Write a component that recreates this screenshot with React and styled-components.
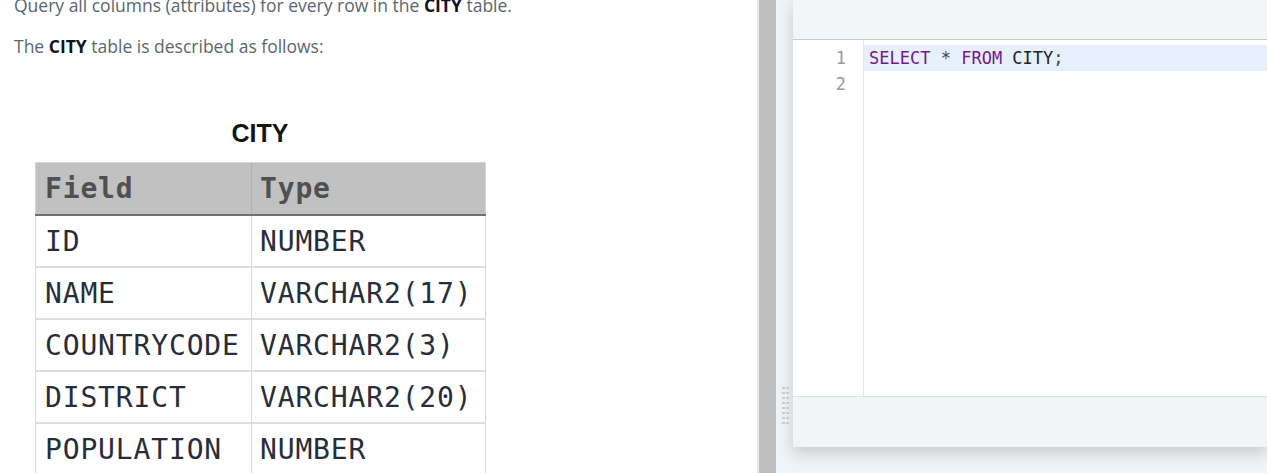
import React from "react";
import styled, { createGlobalStyle } from "styled-components";

const Global = createGlobalStyle`
  html, body {
    margin: 0;
    padding: 0;
    background: #ffffff;
    overflow: hidden;
  }
  * { box-sizing: border-box; }
`;

const Page = styled.div`
  display: flex;
  width: 1267px;
  height: 473px;
  overflow: hidden;
`;

const LeftPane = styled.div`
  width: 757px;
  flex-shrink: 0;
  padding: 0 14px;
  overflow: hidden;
  font-family: "Open Sans", "Liberation Sans", sans-serif;
  font-size: 17.5px;
  line-height: 26px;
  color: #5b6670;
`;

const Para = styled.p`
  margin: ${(p) => (p.$first ? "-8px 0 15px" : "0")};
  white-space: nowrap;
  b {
    color: #0e141e;
    font-weight: 700;
  }
`;

const Figure = styled.div`
  margin: 59px 0 0 21px;
  width: 450px;
`;

const Caption = styled.div`
  font-family: "Liberation Sans", Arial, sans-serif;
  font-weight: 700;
  font-size: 25px;
  line-height: 30px;
  color: #141414;
  text-align: center;
  margin-bottom: 14px;
`;

const Table = styled.table`
  width: 450px;
  border-collapse: collapse;
  table-layout: fixed;
  font-family: "DejaVu Sans Mono", monospace;
  font-size: 28px;
  letter-spacing: 0.85px;
`;

const HeadCell = styled.th`
  height: 52px;
  padding: 2px 0 0 ${(p) => (p.$second ? 8 : 9)}px;
  text-align: left;
  font-weight: 700;
  color: #505050;
  background: #c0c1c0;
  border-top: 1px solid #d6d6d6;
  border-bottom: 2px solid #707171;
  border-left: 1px solid ${(p) => (p.$second ? "#b0b0b0" : "#d4d4d4")};
  border-right: ${(p) => (p.$second ? "1px solid #d4d4d4" : "none")};
  width: ${(p) => (p.$second ? "234px" : "216px")};
`;

const Cell = styled.td`
  height: 52px;
  padding: 3px 0 0 ${(p) => (p.$second ? 8 : 9)}px;
  color: #282d39;
  font-weight: 400;
  white-space: nowrap;
  border-bottom: 2px solid #dedede;
  border-left: 1px solid #d8d8d8;
  border-right: ${(p) => (p.$second ? "1px solid #d8d8d8" : "none")};
`;

const Splitter = styled.div`
  width: 19px;
  flex-shrink: 0;
  background: #c0c0c0;
  border-left: 2px solid #ececec;
`;

const EditorArea = styled.div`
  flex: 1;
  min-width: 0;
  background: #f1f4f6;
  padding-left: 17px;
`;

const Panel = styled.div`
  position: relative;
  height: 447px;
  display: flex;
  flex-direction: column;
  background: #ffffff;
  box-shadow: 0 6px 14px rgba(40, 50, 55, 0.22);
`;

const PanelHeader = styled.div`
  height: 40px;
  flex-shrink: 0;
  background: #f3f6f8;
  border-bottom: 1px solid #c3cdd1;
`;

const CodeArea = styled.div`
  flex: 1;
  display: flex;
  font-family: "DejaVu Sans Mono", monospace;
  font-size: 17px;
`;

const Gutter = styled.div`
  width: 71px;
  flex-shrink: 0;
  padding: 5px 17px 0 0;
  border-right: 1px solid #e4e9eb;
  text-align: right;
  color: #9a9a9a;
`;

const LineNo = styled.div`
  height: 26px;
  line-height: 26px;
`;

const Lines = styled.div`
  flex: 1;
  padding-top: 5px;
`;

const CodeLine = styled.div`
  height: 26px;
  line-height: 26px;
  padding-left: 5px;
  white-space: pre;
  color: #222222;
  background: ${(p) => (p.$active ? "#e6f0fc" : "transparent")};
`;

const Kw = styled.span`
  color: #7a1687;
`;

const Op = styled.span`
  color: #444444;
`;

const PanelFooter = styled.div`
  height: 51px;
  flex-shrink: 0;
  background: #f2f5f6;
  border-top: 1px solid #dbe5e7;
`;

const Grip = styled.div`
  position: absolute;
  left: -11px;
  top: 387px;
  display: grid;
  grid-template-columns: 3px 3px;
  grid-auto-rows: 2px;
  column-gap: 1px;
  row-gap: 3px;
`;

const Dot = styled.span`
  background: #cbcbcb;
`;

const rows = [
  ["ID", "NUMBER"],
  ["NAME", "VARCHAR2(17)"],
  ["COUNTRYCODE", "VARCHAR2(3)"],
  ["DISTRICT", "VARCHAR2(20)"],
  ["POPULATION", "NUMBER"],
];

export default function App() {
  return (
    <>
      <Global />
      <Page>
        <LeftPane>
          <Para $first>
            Query all columns (attributes) for every row in the <b>CITY</b> table.
          </Para>
          <Para>
            The <b>CITY</b> table is described as follows:
          </Para>
          <Figure>
            <Caption>CITY</Caption>
            <Table>
              <thead>
                <tr>
                  <HeadCell>Field</HeadCell>
                  <HeadCell $second>Type</HeadCell>
                </tr>
              </thead>
              <tbody>
                {rows.map(([f, t]) => (
                  <tr key={f}>
                    <Cell>{f}</Cell>
                    <Cell $second>{t}</Cell>
                  </tr>
                ))}
              </tbody>
            </Table>
          </Figure>
        </LeftPane>
        <Splitter />
        <EditorArea>
          <Panel>
            <Grip>
              {Array.from({ length: 16 }).map((_, i) => (
                <Dot key={i} />
              ))}
            </Grip>
            <PanelHeader />
            <CodeArea>
              <Gutter>
                <LineNo>1</LineNo>
                <LineNo>2</LineNo>
              </Gutter>
              <Lines>
                <CodeLine $active>
                  <Kw>SELECT</Kw> <Op>*</Op> <Kw>FROM</Kw> CITY<Op>;</Op>
                </CodeLine>
                <CodeLine> </CodeLine>
              </Lines>
            </CodeArea>
            <PanelFooter />
          </Panel>
        </EditorArea>
      </Page>
    </>
  );
}
